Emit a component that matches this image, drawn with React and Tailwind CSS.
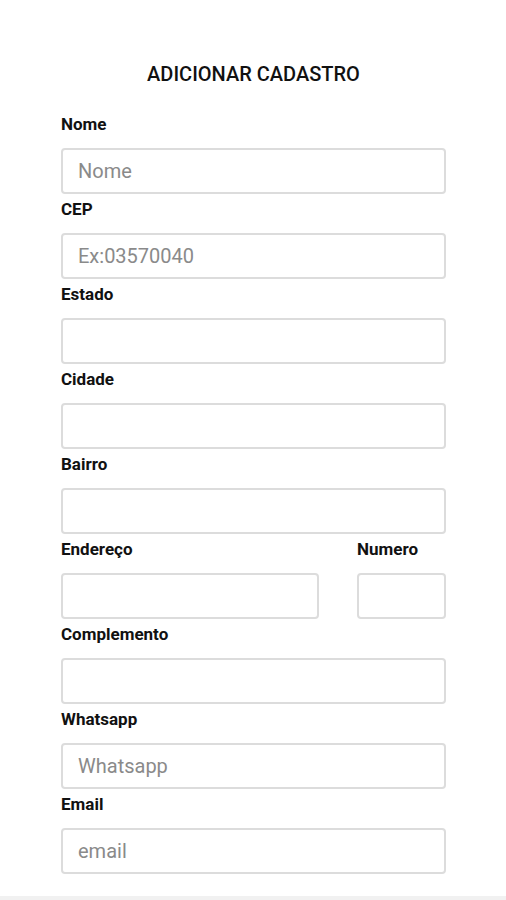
export default function App() {
  const fields = [
    { label: "Nome", placeholder: "Nome" },
    { label: "CEP", placeholder: "Ex:03570040" },
    { label: "Estado", placeholder: "" },
    { label: "Cidade", placeholder: "" },
    { label: "Bairro", placeholder: "" },
  ];
  const after = [
    { label: "Complemento", placeholder: "" },
    { label: "Whatsapp", placeholder: "Whatsapp" },
    { label: "Email", placeholder: "email" },
  ];

  const inputCls =
    "w-full h-[46px] border-2 border-[#dcdcdc] rounded-[4px] px-[15px] text-[20px] text-[#333] placeholder:text-[#8a8a8a] outline-none bg-white";
  const labelCls =
    "text-[17px] font-bold leading-[20px] text-[#111] mb-[14px]";

  const Field = ({ label, placeholder }) => (
    <div className="flex flex-col">
      <label className={labelCls}>{label}</label>
      <input type="text" placeholder={placeholder} className={inputCls} />
    </div>
  );

  return (
    <div
      className="min-h-[900px] bg-white flex flex-col"
      style={{ fontFamily: "Roboto, 'Liberation Sans', sans-serif" }}
    >
      <div className="flex-1 pt-[64px] px-[61px] pr-[60px]">
        <h1 className="text-center text-[20px] font-medium leading-[20px] text-[#111] mb-[30px]">
          ADICIONAR CADASTRO
        </h1>
        <form className="flex flex-col gap-[5px]">
          {fields.map((f) => (
            <Field key={f.label} {...f} />
          ))}
          <div className="flex gap-[38px]">
            <div className="flex flex-col flex-1">
              <label className={labelCls}>Endereço</label>
              <input type="text" className={inputCls} />
            </div>
            <div className="flex flex-col w-[89px]">
              <label className={labelCls}>Numero</label>
              <input type="text" className={inputCls} />
            </div>
          </div>
          {after.map((f) => (
            <Field key={f.label} {...f} />
          ))}
        </form>
      </div>
      <div className="h-[4px] bg-[#f1f1f1]" />
    </div>
  );
}
